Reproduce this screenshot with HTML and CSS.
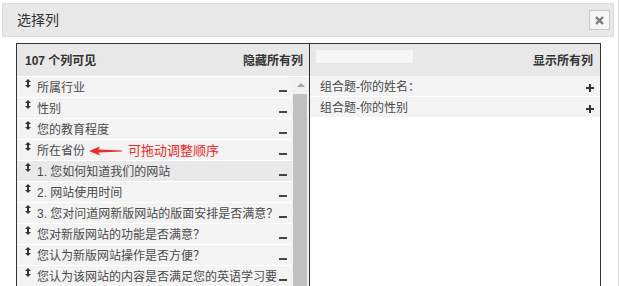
FILE: index.html
```html
<!DOCTYPE html>
<html lang="zh-CN">

<head>
    <meta charset="UTF-8">
    <meta name="viewport" content="width=device-width, initial-scale=1.0">
    <title>选择列</title>
    <link rel="stylesheet" href="styles.css">
</head>

<body>
    <div class="page">
        <div class="dialog-header">
            <span class="dialog-title">选择列</span>
            <span class="close-btn">
                <svg width="9" height="9" viewBox="0 0 9 9"><path d="M1 1 L8 8 M8 1 L1 8" stroke="#7a7a7a" stroke-width="2.4"/></svg>
            </span>
        </div>

        <div class="picker">
            <!-- 可见列 -->
            <div class="panel panel-left">
                <div class="panel-header">
                    <span class="panel-count">107 个列可见</span>
                    <span class="panel-action">隐藏所有列</span>
                </div>
                <div class="panel-list">
                    <ul class="col-list">
                        <li class="col-item"><span class="drag-handle"></span><span class="col-name">所属行业</span><span class="col-minus"></span></li>
                        <li class="col-item"><span class="drag-handle"></span><span class="col-name">性别</span><span class="col-minus"></span></li>
                        <li class="col-item"><span class="drag-handle"></span><span class="col-name">您的教育程度</span><span class="col-minus"></span></li>
                        <li class="col-item"><span class="drag-handle"></span><span class="col-name">所在省份</span><span class="col-minus"></span></li>
                        <li class="col-item hover"><span class="drag-handle"></span><span class="col-name">1. 您如何知道我们的网站</span><span class="col-minus"></span></li>
                        <li class="col-item"><span class="drag-handle"></span><span class="col-name">2. 网站使用时间</span><span class="col-minus"></span></li>
                        <li class="col-item"><span class="drag-handle"></span><span class="col-name">3. 您对问道网新版网站的版面安排是否满意？</span><span class="col-minus"></span></li>
                        <li class="col-item"><span class="drag-handle"></span><span class="col-name">您对新版网站的功能是否满意？</span><span class="col-minus"></span></li>
                        <li class="col-item"><span class="drag-handle"></span><span class="col-name">您认为新版网站操作是否方便？</span><span class="col-minus"></span></li>
                        <li class="col-item"><span class="drag-handle"></span><span class="col-name">您认为该网站的内容是否满足您的英语学习要求？</span><span class="col-minus"></span></li>
                    </ul>
                    <div class="scrollbar">
                        <span class="scroll-up"></span>
                        <span class="scroll-thumb"></span>
                    </div>
                </div>
                <!-- 标注 -->
                <div class="drag-tip">
                    <svg width="33" height="10" viewBox="0 0 33 10"><path d="M0 5 L11 0.5 L9.5 3.6 L33 4.4 L33 5.6 L9.5 6.4 L11 9.5 Z" fill="#ee2b2b"/></svg>
                    <span>可拖动调整顺序</span>
                </div>
            </div>

            <!-- 隐藏列 -->
            <div class="panel panel-right">
                <div class="panel-header">
                    <span class="search-box"></span>
                    <span class="panel-action">显示所有列</span>
                </div>
                <ul class="col-list">
                    <li class="col-item plain"><span class="col-name">组合题-你的姓名：</span><span class="col-plus"></span></li>
                    <li class="col-item plain"><span class="col-name">组合题-你的性别</span><span class="col-plus"></span></li>
                </ul>
            </div>
        </div>
    </div>
</body>

</html>
```

FILE: styles.css
```css
body {
    margin: 0;
    font-family: "Liberation Sans", "Noto Sans CJK SC", sans-serif;
    color: #333;
    background: #fff;
}

.page {
    box-sizing: border-box;
    width: 619px;
    height: 286px;
    padding: 3px 0 0 2px;
    border-right: 1px solid #dedede;
    overflow: hidden;
}

.dialog-header {
    box-sizing: border-box;
    display: flex;
    align-items: center;
    justify-content: space-between;
    width: 612px;
    height: 34px;
    padding: 0 3px 0 14px;
    background: #e8e8e8;
    border: 1px solid #dadada;
}

.dialog-title {
    font-size: 14px;
    line-height: 20px;
    color: #333;
}

.close-btn {
    box-sizing: border-box;
    display: flex;
    align-items: center;
    justify-content: center;
    width: 21px;
    height: 20px;
    background: #f6f6f6;
    border: 1px solid #c8c8c8;
}

.picker {
    box-sizing: border-box;
    display: grid;
    grid-template-columns: 293px 1fr;
    width: 585px;
    height: 260px;
    margin: 6px 0 0 14px;
    border: 1px solid #333;
}

.panel {
    position: relative;
    display: flex;
    flex-direction: column;
    min-width: 0;
}

.panel-left {
    border-right: 1px solid #333;
}

.panel-header {
    box-sizing: border-box;
    display: flex;
    align-items: center;
    justify-content: space-between;
    height: 32px;
    padding: 1px 6px 0 8px;
    background: #e8e8e8;
    font-size: 12px;
    font-weight: bold;
    line-height: 16px;
    color: #333;
}

.panel-right .panel-header {
    padding: 0 7px 0 5px;
}

.search-box {
    box-sizing: border-box;
    align-self: flex-start;
    width: 99px;
    height: 15px;
    margin-top: 5px;
    background: #f6f6f6;
    border: 1px solid #e6e6e6;
}

.panel-right .panel-action {
    margin-top: 2px;
}

.panel-list {
    display: flex;
    flex: 1;
    min-height: 0;
    padding-top: 1px;
}

.col-list {
    flex: 1;
    min-width: 0;
    margin: 0;
    padding: 0;
    list-style: none;
}

.col-item {
    display: flex;
    height: 20px;
    margin-bottom: 1px;
    padding-left: 8px;
    background: #f3f3f3;
    font-size: 12px;
    line-height: 20px;
    color: #4a4a4a;
}

.col-item.hover {
    background: #e9e9e9;
}

.col-item.plain {
    padding-left: 10px;
}

/* 上下箭头 */
.drag-handle {
    position: relative;
    flex: none;
    width: 6px;
    height: 9px;
    margin: 2px 6px 0 0;
    background: linear-gradient(#333, #333) 2px 2px / 2px 5px no-repeat;
}

.drag-handle::before,
.drag-handle::after {
    content: "";
    position: absolute;
    left: 0;
    width: 0;
    height: 0;
    border-left: 3px solid transparent;
    border-right: 3px solid transparent;
}

.drag-handle::before {
    top: 0;
    border-bottom: 3px solid #333;
}

.drag-handle::after {
    bottom: 0;
    border-top: 3px solid #333;
}

.col-name {
    flex: 1;
    min-width: 0;
    padding-top: 1px;
    overflow: hidden;
    white-space: nowrap;
}

.col-minus {
    flex: none;
    align-self: flex-end;
    width: 8px;
    height: 2px;
    margin: 0 5px 5px 1px;
    background: #444;
}

.col-plus {
    flex: none;
    align-self: center;
    width: 8px;
    height: 8px;
    margin: 3px 6px 0 0;
    background:
        linear-gradient(#333, #333) 0 3px / 8px 2px no-repeat,
        linear-gradient(#333, #333) 3px 0 / 2px 8px no-repeat;
}

.scrollbar {
    display: flex;
    flex-direction: column;
    flex: none;
    width: 17px;
    background: #f1f1f1;
}

.scroll-up {
    position: relative;
    height: 17px;
}

.scroll-up::after {
    content: "";
    position: absolute;
    left: 5px;
    top: 6px;
    border-left: 4px solid transparent;
    border-right: 4px solid transparent;
    border-bottom: 4px solid #a3a3a3;
}

.scroll-thumb {
    flex: 1;
    margin: 0 2px 0 1px;
    background: #c1c1c1;
}

.drag-tip {
    position: absolute;
    left: 72px;
    top: 98px;
    display: flex;
    align-items: center;
    gap: 6px;
    font-size: 13px;
    line-height: 18px;
    color: #ee2b2b;
}
```
